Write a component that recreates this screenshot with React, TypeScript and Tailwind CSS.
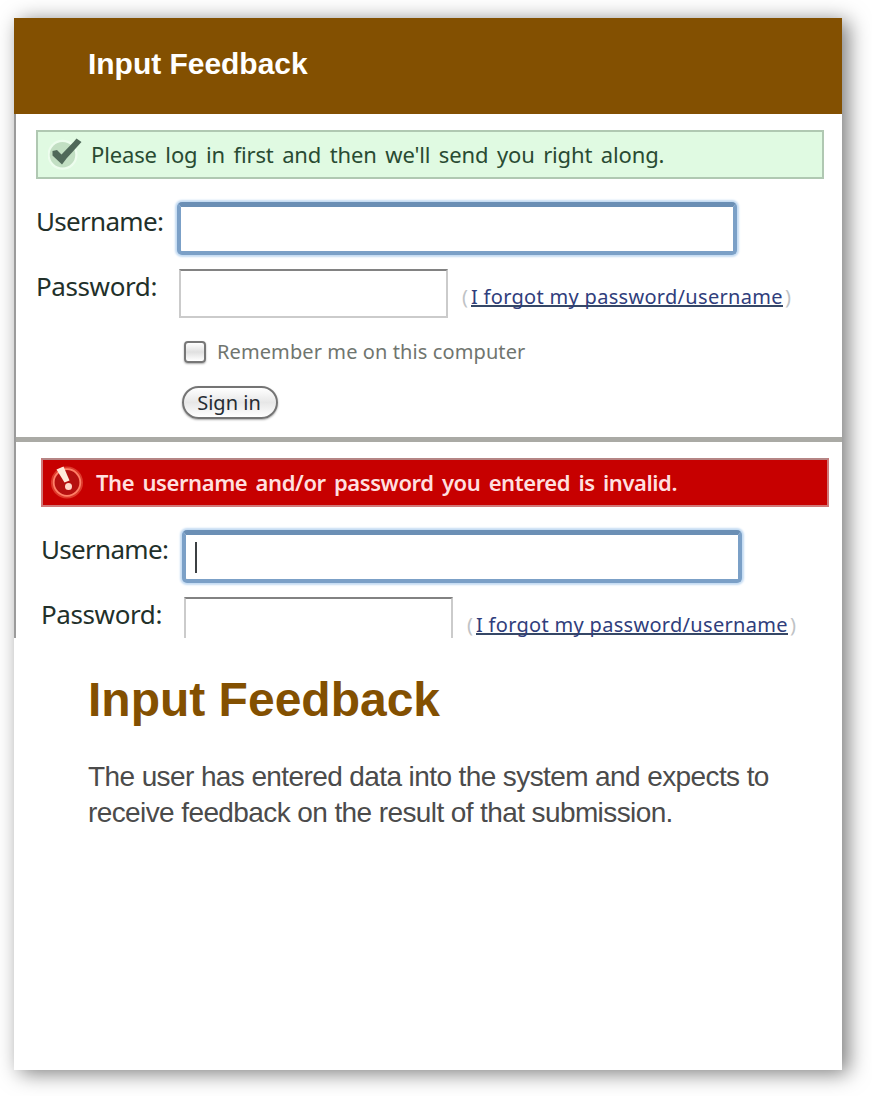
import React from "react";

function CheckIcon() {
  return (
    <svg className="h-9 w-9 shrink-0" viewBox="0 0 36 36">
      <circle cx="14.5" cy="17.8" r="15" fill="#edfdee" />
      <circle cx="14.5" cy="17.8" r="12.8" fill="#c2dfc3" />
      <path d="M4.500 14 L9 13 L13.500 17.500 L25.500 5 L28.500 1.500 L33.500 5 L18.500 21.500 L14 27.500 L4.500 18.500 Z" fill="#50695a" />
    </svg>
  );
}

function ErrorIcon() {
  return (
    <svg className="h-9 w-9 shrink-0" viewBox="0 0 36 36">
      <circle cx="16" cy="17.500" r="14.300" fill="none" stroke="#dd3a2c" strokeWidth="3.500" />
      <circle cx="16" cy="17.500" r="13.300" fill="#b51010" stroke="#ff8068" strokeWidth="1.800" />
      <path d="M5.500 4.500 L12.500 1.500 L18.500 15.500 L13.500 17.500 Z" fill="#ffeadb" />
      <circle cx="17.500" cy="21.500" r="3.500" fill="#ffd8ca" />
    </svg>
  );
}

function Fields({ caret = false }: { caret?: boolean }) {
  return (
    <>
      <div className="mt-[22px] flex h-[54px]">
        <label className="w-[141px] pt-[3px] text-[26px] leading-[34px] tracking-[-0.7px] whitespace-nowrap text-[#22302a]">Username:</label>
        <div className="mt-px flex h-[53px] w-[560px] items-center rounded-[5px] border-4 border-t-[5px] border-[#7ba0c7] border-t-[#6b8fb5] bg-white pl-[9px] shadow-[0_0_2px_2px_#c5dcf3]">
          {caret && <span className="h-[31px] w-[2px] bg-[#3c4043]" />}
        </div>
      </div>
      <div className="mt-[14px] flex h-[49px]">
        <label className="w-[143px] text-[26px] leading-[34px] tracking-[-0.4px] whitespace-nowrap text-[#22302a]">Password:</label>
        <div className="h-[49px] w-[269px] border-2 border-[#cbcbcb] border-t-[#828282] bg-white" />
        <div className="flex pt-[14px] pl-[14px] text-[20px] leading-[28px] whitespace-nowrap text-[#bfc3c6]">
          <span className="w-[9px]">(</span>
          <span className="h-[24px] w-[312px] border-b-2 border-[#354766] leading-[27px] tracking-[0.3px] text-[#303e7c]">I forgot my password/username</span>
          <span className="pl-[2px]">)</span>
        </div>
      </div>
    </>
  );
}

export default function App() {
  return (
    <div className="h-[1096px] w-[872px] overflow-hidden bg-white pt-[18px] pl-[14px]">
      <main className="h-[1052px] w-[828px] bg-white font-['Liberation_Sans',sans-serif] shadow-[6px_3px_20px_rgba(0,0,0,0.53)]">
        <header className="flex h-[96px] items-center bg-[#835001] pb-[6px] pl-[74px] text-[30px] font-bold text-white">
          <span className="tracking-[-0.03px]">Input Feedback</span>
        </header>
        <div className="h-[524px] overflow-hidden border-l-2 border-[#9b9b9b] font-['Noto_Sans',sans-serif]">
          <section className="h-[323px] pt-[16px] pl-[20px]">
            <div className="flex h-[49px] w-[788px] items-center border-2 border-[#b0c8b2] bg-[#e0fae2] pl-[10px]">
              <CheckIcon />
              <span className="pl-[7px] text-[22px] tracking-[-0.15px] whitespace-nowrap text-[#294b32] [word-spacing:3px]">Please log in first and then we'll send you right along.</span>
            </div>
            <Fields />
            <div className="mt-[20px] flex h-[28px] items-center pl-[148px] text-[20px] whitespace-nowrap text-[#70756f]">
              <span className="h-[22px] w-[22px] rounded-[4px] border-2 border-[#777] bg-linear-to-b from-white via-[#e0e0e0] to-white shadow-[0_1px_2px_#aaa]" />
              <span className="pl-[11px] tracking-[0.1px]">Remember me on this computer</span>
            </div>
            <button className="mt-[20px] ml-[146px] flex h-[33px] w-[96px] items-center justify-center rounded-full border-2 border-[#747474] bg-linear-to-b from-white via-[#e7e7e7] to-white pr-[2px] text-[20px] whitespace-nowrap text-[#252b32] shadow-[0_1px_2px_#aaa]">Sign in</button>
          </section>
          <div className="h-[5px] bg-[#aaaaa5]" />
          <section className="pt-[16px] pl-[25px]">
            <div className="flex h-[49px] w-[788px] items-center border-2 border-[#d07878] border-t-[#b58585] bg-[#c70000] pl-[8px]">
              <ErrorIcon />
              <span className="pl-[9px] text-[22px] font-semibold tracking-[-0.42px] whitespace-nowrap text-[#ffdfdf] [word-spacing:3px]">The username and/or password you entered is invalid.</span>
            </div>
            <Fields caret />
          </section>
        </div>
        <article className="pt-[34px] pl-[74px]">
          <h1 className="text-[48px] leading-[56px] font-bold text-[#835001]">Input Feedback</h1>
          <p className="mt-[31px] text-[28px] leading-[36px] tracking-[-0.6px] text-[#4b4b4b]">
            The user has entered data into the system and expects to<br />receive feedback on the result of that submission.
          </p>
        </article>
      </main>
    </div>
  );
}
